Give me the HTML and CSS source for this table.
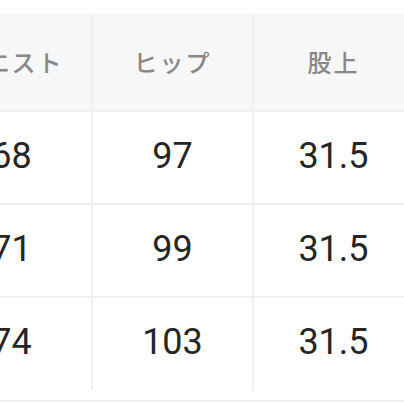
FILE: index.html
```html
<!DOCTYPE html>
<html lang="ja">
<head>
<meta charset="utf-8">
<link rel="stylesheet" href="styles.css">
</head>
<body>
<div class="page">
  <div class="sheet">
    <div class="cell head">ウエスト</div>
    <div class="cell head">ヒップ</div>
    <div class="cell head">股上</div>
    <div class="cell num">68</div>
    <div class="cell num">97</div>
    <div class="cell num">31.5</div>
    <div class="cell num">71</div>
    <div class="cell num">99</div>
    <div class="cell num">31.5</div>
    <div class="cell num">74</div>
    <div class="cell num">103</div>
    <div class="cell num">31.5</div>
  </div>
  <div class="rule"></div>
</div>
</body>
</html>
```
FILE: styles.css
```css
html, body {
  margin: 0;
  padding: 0;
  background: #ffffff;
  overflow: hidden;
  width: 404px;
  height: 404px;
}
.page {
  padding-top: 14px;
  margin-left: -68px;
  width: 481px;
}
.sheet {
  display: grid;
  grid-template-columns: 159px 159px 159px;
  grid-template-rows: 96px 91px 91px 92px;
  gap: 2px;
  background: #f0f0f0;
}
.cell {
  display: flex;
  align-items: center;
  justify-content: center;
  background: #ffffff;
}
.head {
  background: #f7f7f7;
  color: #888888;
  font-family: "Noto Sans CJK JP", "Noto Sans", sans-serif;
  font-weight: 500;
  font-size: 24px;
  letter-spacing: 2px;
  padding-bottom: 2px;
}
.num {
  color: #262626;
  font-family: Roboto, "Noto Sans", sans-serif;
  font-size: 36px;
  padding-bottom: 4px;
}
.rule {
  margin-top: 10px;
  height: 2px;
  background: #f0f0f0;
}
```
